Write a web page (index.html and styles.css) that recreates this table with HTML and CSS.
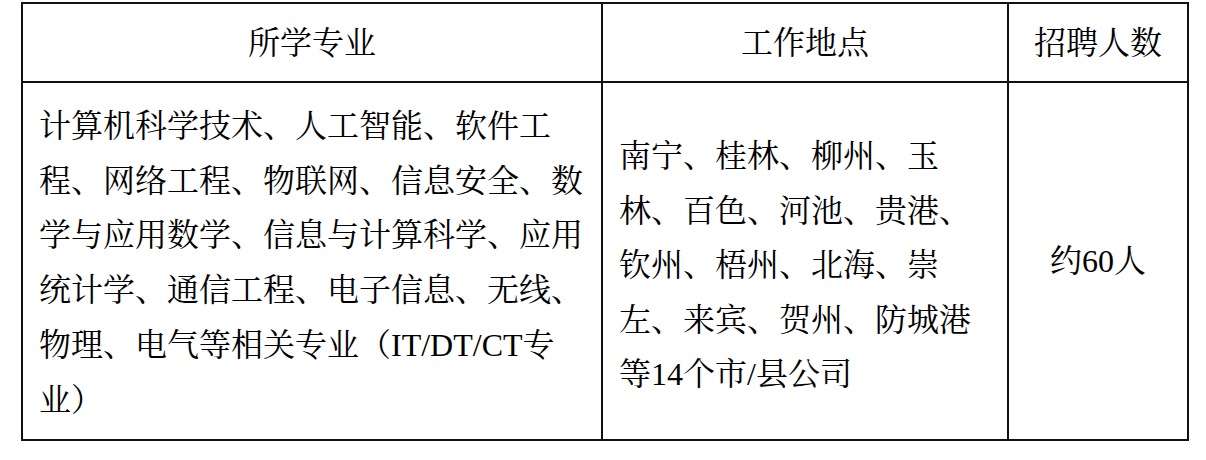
FILE: index.html
```html
<!DOCTYPE html>
<html lang="zh-CN">
<head>
<meta charset="utf-8">
<title>招聘专业</title>
<link rel="stylesheet" href="styles.css">
</head>
<body>
<table class="recruit">
  <colgroup>
    <col class="c-major">
    <col class="c-place">
    <col class="c-count">
  </colgroup>
  <thead>
    <tr>
      <th>所学专业</th>
      <th>工作地点</th>
      <th>招聘人数</th>
    </tr>
  </thead>
  <tbody>
    <tr>
      <td class="major">计算机科学技术、人工智能、软件工程、网络工程、物联网、信息安全、数学与应用数学、信息与计算科学、应用统计学、通信工程、电子信息、无线、物理、电气等相关专业（IT/DT/CT专业）</td>
      <td class="place">南宁、桂林、柳州、玉林、百色、河池、贵港、钦州、梧州、北海、崇左、来宾、贺州、防城港等14个市/县公司</td>
      <td class="count">约60人</td>
    </tr>
  </tbody>
</table>
</body>
</html>
```

FILE: styles.css
```css
html, body {
  margin: 0;
  padding: 0;
  background: #ffffff;
}

body {
  padding: 2px 0 0 21px;
  font-family: "Liberation Serif", "Noto Serif CJK SC", "Noto Sans CJK SC", serif;
  color: #000000;
}

.recruit {
  border-collapse: collapse;
  table-layout: fixed;
  width: 1166px;
  font-size: 32px;
}

.c-major { width: 580px; }
.c-place { width: 406px; }
.c-count { width: 180px; }

.recruit th,
.recruit td {
  border: 2px solid #111111;
  padding: 0 16px;
  vertical-align: middle;
}

.recruit th {
  height: 77px;
  font-weight: normal;
  text-align: center;
  line-height: 40px;
}

.recruit td {
  line-height: 54.5px;
  text-align: left;
}

.recruit td.major {
  line-height: 54.7px;
  padding-top: 16px;
  padding-bottom: 12px;
}

.recruit td.place {
  padding-top: 9px;
}

.recruit td.count {
  text-align: center;
}
```
